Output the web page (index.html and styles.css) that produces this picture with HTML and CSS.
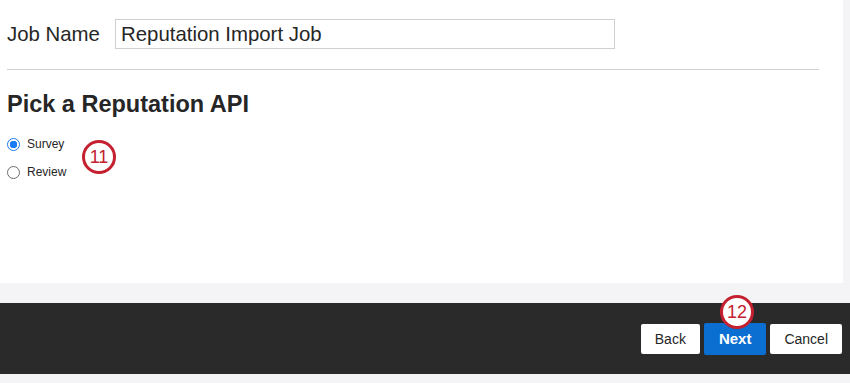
FILE: index.html
```html
<!DOCTYPE html>
<html lang="en">
<head>
  <meta charset="UTF-8">
  <title>Reputation Import Job</title>
  <link rel="stylesheet" href="styles.css">
</head>
<body>
  <div class="panel">
    <div class="job-row">
      <label class="job-label" for="jobName">Job Name</label>
      <input type="text" id="jobName" class="job-input" value="Reputation Import Job">
    </div>

    <hr class="divider">

    <h2 class="api-title">Pick a Reputation API</h2>

    <div class="api-options">
      <label class="option"><input type="radio" name="api" checked> Survey</label>
      <label class="option"><input type="radio" name="api"> Review</label>
      <span class="step-badge step-11">11</span>
    </div>
  </div>

  <div class="footer">
    <button class="btn">Back</button>
    <button class="btn btn-primary">Next<span class="step-badge step-12">12</span></button>
    <button class="btn">Cancel</button>
  </div>
</body>
</html>
```

FILE: styles.css
```css
body {
  margin: 0;
  background: #f4f4f6;
  font-family: "Liberation Sans", Arial, sans-serif;
  color: #262626;
}

.panel {
  width: 843px;
  height: 283px;
  box-sizing: border-box;
  background: #fff;
  padding: 19px 24px 0 7px;
}

.job-row {
  display: flex;
  align-items: center;
  gap: 16px;
}

.job-label {
  flex: none;
  width: 92px;
  white-space: nowrap;
  font-size: 20.4px;
  line-height: 30px;
}

.job-input {
  flex: none;
  width: 500px;
  height: 30px;
  box-sizing: border-box;
  border: 1px solid #cfcfcf;
  padding: 0 5px;
  font-family: inherit;
  font-size: 20.4px;
  color: #262626;
  outline: none;
}

.divider {
  margin: 20px 0 0;
  border: none;
  border-top: 1px solid #d2d2d2;
}

.api-title {
  margin: 21px 0 0;
  font-size: 23.5px;
  line-height: 26px;
  font-weight: bold;
  color: #262626;
}

.api-options {
  position: relative;
  margin-top: 13px;
}

.option {
  display: flex;
  align-items: center;
  gap: 7px;
  height: 28px;
  font-size: 12px;
  color: #262626;
}

.option input {
  appearance: none;
  margin: 0;
  width: 13px;
  height: 13px;
  border: 1px solid #6d6d6d;
  border-radius: 50%;
  background: #fff;
}

.option input:checked {
  border-color: #1a7cf5;
  background: radial-gradient(circle, #1a7cf5 0 3.5px, #fff 4px);
}

.step-badge {
  position: absolute;
  width: 34px;
  height: 34px;
  box-sizing: border-box;
  border: 3px solid #c4202f;
  border-radius: 50%;
  background: #fff;
  color: #c4202f;
  font-family: "Liberation Sans", Arial, sans-serif;
  font-size: 18px;
  font-weight: normal;
  line-height: 28px;
  text-align: center;
}

.step-11 {
  left: 75px;
  top: 10px;
}

.step-12 {
  left: 16px;
  top: -28px;
}

.footer {
  display: flex;
  justify-content: flex-end;
  align-items: center;
  gap: 4px;
  height: 71px;
  margin-top: 20px;
  padding: 0 8px;
  background: #2a2a2a;
}

.btn {
  height: 30px;
  padding: 0 14px;
  border: none;
  border-radius: 2px;
  background: #fff;
  color: #262626;
  font-family: inherit;
  font-size: 14px;
}

.btn-primary {
  position: relative;
  height: 32px;
  padding: 0 15px;
  background: #0b6fd1;
  color: #fff;
  font-size: 15px;
  font-weight: bold;
}
```
